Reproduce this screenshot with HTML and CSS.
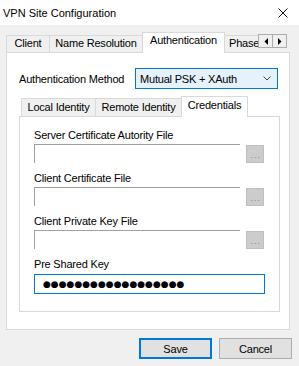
FILE: index.html
```html
<!DOCTYPE html>
<html>
<head>
<meta charset="utf-8">
<link rel="stylesheet" href="styles.css">
</head>
<body>
<div class="window">
  <div class="titlebar">
    <span class="title">VPN Site Configuration</span>
    <svg class="close" width="10" height="10" viewBox="0 0 10 10"><path d="M0.5 0.5L9.5 9.5M9.5 0.5L0.5 9.5" stroke="#111" stroke-width="1" fill="none"/></svg>
  </div>
  <div class="body">
    <div class="tabstrip">
      <div class="tabs">
        <div class="tab t-client">Client</div>
        <div class="tab t-name">Name Resolution</div>
        <div class="tab active t-auth">Authentication</div>
        <div class="tab t-phase">Phase 1</div>
      </div>
      <div class="scroller">
        <span class="sbtn"><svg width="4" height="7" viewBox="0 0 4 7"><path d="M4 0V7L0.5 3.5Z" fill="#000"/></svg></span>
        <span class="sbtn"><svg width="4" height="7" viewBox="0 0 4 7"><path d="M0 0V7L3.5 3.5Z" fill="#000"/></svg></span>
      </div>
    </div>
    <div class="panel">
      <div class="method-row">
        <span class="label">Authentication Method</span>
        <div class="select">
          <span>Mutual PSK + XAuth</span>
          <svg class="chev" width="8" height="5" viewBox="0 0 8 5"><path d="M0.5 0.5L4 4L7.5 0.5" stroke="#444" stroke-width="1" fill="none"/></svg>
        </div>
      </div>
      <div class="subtabs">
        <div class="stab s-local">Local Identity</div>
        <div class="stab s-remote">Remote Identity</div>
        <div class="stab active s-cred">Credentials</div>
      </div>
      <div class="subpanel">
        <div class="field">
          <div class="flabel">Server Certificate Autority File</div>
          <div class="frow"><div class="input"></div><div class="browse">...</div></div>
        </div>
        <div class="field">
          <div class="flabel">Client Certificate File</div>
          <div class="frow"><div class="input"></div><div class="browse">...</div></div>
        </div>
        <div class="field">
          <div class="flabel">Client Private Key File</div>
          <div class="frow"><div class="input"></div><div class="browse">...</div></div>
        </div>
        <div class="field">
          <div class="flabel psk-label">Pre Shared Key</div>
          <div class="psk">●●●●●●●●●●●●●●●●●●</div>
        </div>
      </div>
    </div>
    <div class="buttons">
      <button class="btn default">Save</button>
      <button class="btn">Cancel</button>
    </div>
  </div>
</div>
</body>
</html>
```

FILE: styles.css
```css
* { box-sizing: border-box; }
html, body { margin: 0; padding: 0; }
body {
  width: 299px;
  height: 366px;
  background: #f0f0f0;
  font-family: "Liberation Sans", Arial, sans-serif;
  font-size: 11px;
  letter-spacing: -0.2px;
  color: #000;
  overflow: hidden;
}
.window { width: 299px; height: 366px; }
.titlebar {
  height: 25px;
  background: #fff;
  display: flex;
  align-items: center;
  padding: 0 11px 0 3px;
}
.title { font-size: 11px; letter-spacing: 0; padding-top: 1px; }
.close { margin-left: auto; margin-top: 1px; }

.body { padding: 7px 9px 0 6px; }

.tabstrip {
  display: flex;
  height: 20px;
  position: relative;
  z-index: 1;
}
.tabs {
  width: 252px;
  height: 21px;
  display: flex;
  align-items: flex-end;
  overflow: hidden;
}
.tab {
  flex: none;
  height: 17px;
  margin-bottom: 1px;
  border: 1px solid #d9d9d9;
  border-bottom: none;
  background: #f0f0f0;
  line-height: 15px;
  text-align: center;
  white-space: nowrap;
}
.tab + .tab { margin-left: -1px; }
.tab.active {
  height: 21px;
  margin-bottom: 0;
  background: #fff;
  line-height: 14px;
  position: relative;
  z-index: 2;
}
.t-client { width: 44px; }
.t-name { width: 94px; }
.t-auth { width: 83px; }
.t-phase { width: 40px; text-align: left; padding-left: 4px; }

.scroller {
  display: flex;
  margin-top: 2px;
  height: 14px;
}
.sbtn {
  width: 15px;
  height: 14px;
  border: 1px solid #adadad;
  background: #f0f0f0;
  display: flex;
  align-items: center;
  justify-content: center;
}
.sbtn + .sbtn { margin-left: -1px; }

.panel {
  height: 278px;
  background: #fff;
  border: 1px solid #d9d9d9;
  padding: 15px 11px 0 12px;
}
.method-row {
  display: flex;
  align-items: center;
  justify-content: space-between;
  height: 21px;
}
.select {
  width: 143px;
  height: 21px;
  border: 1px solid #0078d7;
  background: #e5f1fb;
  display: flex;
  align-items: center;
  padding-left: 4px;
  padding-right: 6px;
}
.chev { margin-left: auto; }

.subtabs {
  margin-top: 7px;
  height: 20px;
  display: flex;
  align-items: flex-end;
  padding-left: 2px;
  position: relative;
  z-index: 1;
}
.stab {
  flex: none;
  height: 18px;
  border: 1px solid #d9d9d9;
  border-bottom: none;
  background: #f0f0f0;
  line-height: 16px;
  text-align: center;
  white-space: nowrap;
}
.stab + .stab { margin-left: -1px; }
.stab.active {
  height: 21px;
  margin-bottom: -1px;
  background: #fff;
  line-height: 16px;
}
.s-local { width: 75px; }
.s-remote { width: 87px; }
.s-cred { width: 67px; }

.subpanel {
  width: 261px;
  height: 196px;
  border: 1px solid #d9d9d9;
  background: #fff;
  padding: 12px 0 0 14px;
}
.field + .field { margin-top: 9px; }
.flabel { height: 13px; line-height: 13px; margin-bottom: 2px; }
.psk-label { margin-bottom: 3px; }
.frow { display: flex; align-items: center; }
.input {
  width: 206px;
  height: 19px;
  border-top: 1px solid #a0a0a0;
  border-left: 1px solid #a0a0a0;
  background: #fff;
}
.browse {
  width: 18px;
  height: 18px;
  margin-left: 6px;
  margin-top: 1px;
  background: #cccccc;
  border: 1px solid #bfbfbf;
  color: #838383;
  font-size: 9px;
  letter-spacing: 1px;
  line-height: 18px;
  text-align: center;
  padding-left: 1px;
}
.psk {
  width: 231px;
  height: 20px;
  border: 1px solid #0078d7;
  padding-left: 8px;
  font-family: "DejaVu Sans", sans-serif;
  font-size: 9px;
  letter-spacing: 0;
  line-height: 18px;
  white-space: nowrap;
  overflow: hidden;
}

.buttons {
  display: flex;
  justify-content: flex-end;
  gap: 7px;
  margin-top: 8px;
  margin-right: -2px;
}
.btn {
  width: 73px;
  height: 21px;
  background: #e1e1e1;
  border: 1px solid #adadad;
  font-family: "Liberation Sans", Arial, sans-serif;
  font-size: 11px;
  letter-spacing: -0.2px;
  color: #000;
  padding: 0;
  margin: 0;
}
.btn.default { border: 2px solid #0078d7; }
```
